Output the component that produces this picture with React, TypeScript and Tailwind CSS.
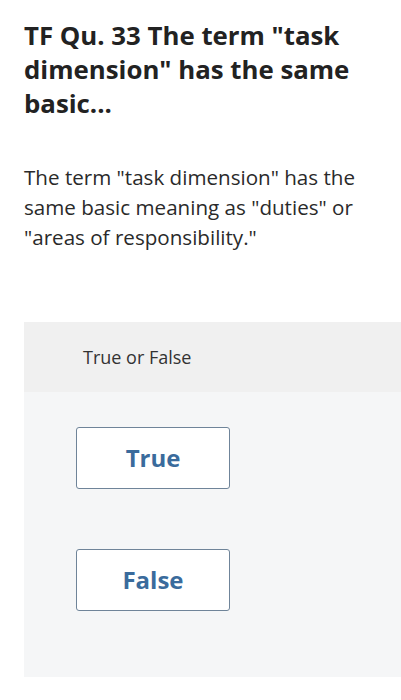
import React from "react";

export default function App() {
  return (
    <div className="w-[401px] h-[700px] bg-white overflow-hidden" style={{ fontFamily: '"Open Sans", "Lato", sans-serif' }}>
      <div className="pt-[18px] pl-[24px] pr-[20px]">
        <h1 className="text-[25.8px] leading-[34px] font-bold text-[#222]">
          TF Qu. 33 The term "task dimension" has the same basic...
        </h1>
        <p className="mt-[42px] text-[20.6px] leading-[30px] text-[#2a2a2a]">
          The term "task dimension" has the same basic meaning as "duties" or "areas of responsibility."
        </p>
      </div>
      <div className="ml-[24px] mt-[70px] w-[377px] h-[355px] bg-[#f5f6f7] flex flex-col">
        <div className="h-[70px] bg-[#f0f0f0] flex items-center pl-[59px] text-[18px] text-[#333]">
          True or False
        </div>
        <div className="flex flex-col gap-[60px] pt-[35px] pl-[52px]">
          <button className="w-[154px] h-[62px] bg-white border border-[#6f8499] rounded-[3px] text-[24px] font-bold text-[#3a6b9c]">
            True
          </button>
          <button className="w-[154px] h-[62px] bg-white border border-[#6f8499] rounded-[3px] text-[24px] font-bold text-[#3a6b9c]">
            False
          </button>
        </div>
      </div>
    </div>
  );
}
